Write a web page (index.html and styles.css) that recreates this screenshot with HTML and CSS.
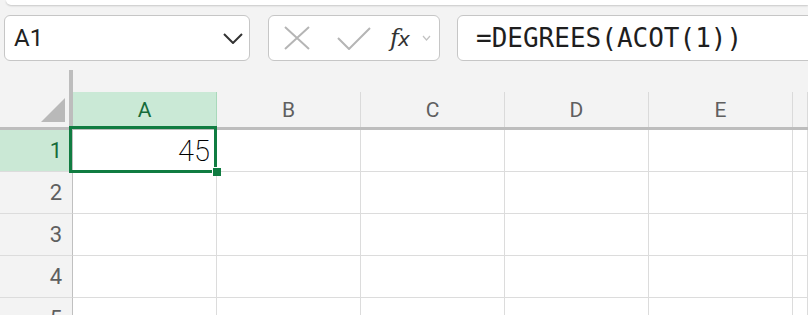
FILE: index.html
```html
<!DOCTYPE html>
<html>

<head>
    <meta charset="utf-8">
    <title>DEGREES ACOT</title>
    <link rel="stylesheet" href="styles.css">
</head>

<body>
    <div class="ribbon"></div>

    <!-- 수식 입력줄 -->
    <div class="formula-row">
        <div class="namebox">
            <span class="namebox-text">A1</span>
            <svg class="namebox-arrow" width="20" height="11" viewBox="0 0 20 11">
                <path d="M1 1 L10 10 L19 1" fill="none" stroke="#333" stroke-width="2"/>
            </svg>
        </div>
        <div class="fx-buttons">
            <svg class="btn-x" width="28" height="24" viewBox="0 0 28 24">
                <path d="M2 1 L26 23 M26 1 L2 23" stroke="#b5b5b5" stroke-width="2" fill="none"/>
            </svg>
            <svg class="btn-ok" width="34" height="23" viewBox="0 0 34 23">
                <path d="M1 11 L12 22 L33 1" stroke="#b5b5b5" stroke-width="2" fill="none"/>
            </svg>
            <span class="btn-fx"><i>f</i><em>x</em></span>
            <svg class="btn-more" width="9" height="6" viewBox="0 0 9 6">
                <path d="M1 1 L4.5 5 L8 1" stroke="#c2c2c2" stroke-width="1.2" fill="none"/>
            </svg>
        </div>
        <div class="formula">=DEGREES(ACOT(1))</div>
    </div>

    <!-- 시트 -->
    <div class="sheet">
        <div class="head-row">
            <div class="corner"><span class="corner-tri"></span></div>
            <div class="col-head active">A</div>
            <div class="col-head">B</div>
            <div class="col-head">C</div>
            <div class="col-head">D</div>
            <div class="col-head">E</div>
            <div class="col-head col-f"></div>
        </div>

        <div class="row">
            <div class="row-head active">1</div>
            <div class="cell selected">45<span class="sel-box"><span class="sel-handle"></span></span></div>
            <div class="cell"></div>
            <div class="cell"></div>
            <div class="cell"></div>
            <div class="cell"></div>
            <div class="cell col-f"></div>
        </div>
        <div class="row">
            <div class="row-head">2</div>
            <div class="cell"></div>
            <div class="cell"></div>
            <div class="cell"></div>
            <div class="cell"></div>
            <div class="cell"></div>
            <div class="cell col-f"></div>
        </div>
        <div class="row">
            <div class="row-head">3</div>
            <div class="cell"></div>
            <div class="cell"></div>
            <div class="cell"></div>
            <div class="cell"></div>
            <div class="cell"></div>
            <div class="cell col-f"></div>
        </div>
        <div class="row">
            <div class="row-head">4</div>
            <div class="cell"></div>
            <div class="cell"></div>
            <div class="cell"></div>
            <div class="cell"></div>
            <div class="cell"></div>
            <div class="cell col-f"></div>
        </div>
        <div class="row">
            <div class="row-head">5</div>
            <div class="cell"></div>
            <div class="cell"></div>
            <div class="cell"></div>
            <div class="cell"></div>
            <div class="cell"></div>
            <div class="cell col-f"></div>
        </div>
    </div>
</body>

</html>
```

FILE: styles.css
```css
body {
    margin: 0;
    background: #f3f3f3;
    font-family: Roboto, "Liberation Sans", sans-serif;
    overflow: hidden;
}

/* 리본 아래 끝 */
.ribbon {
    height: 5px;
    margin-left: 6px;
    background: #fff;
    border-bottom-left-radius: 7px;
    box-shadow: 0 1px 2px rgba(0, 0, 0, .18);
}

/* 수식 입력줄 */
.formula-row {
    display: flex;
    gap: 17px;
    padding: 10px 0 0 4px;
    height: 46px;
}

.namebox,
.fx-buttons,
.formula {
    box-sizing: border-box;
    height: 46px;
    background: #fff;
    border: 1px solid #c6c6c6;
    border-radius: 6px;
    display: flex;
    align-items: center;
}

.namebox {
    width: 246px;
    padding: 0 6px 0 9px;
    justify-content: space-between;
}

.namebox-text {
    font-size: 24px;
    color: #222;
}

.fx-buttons {
    width: 172px;
    margin-left: 1px;
    padding-left: 14px;
}

.btn-ok {
    margin-left: 26px;
}

.btn-fx {
    margin-left: 19px;
    color: #333;
}

.btn-fx i {
    font-family: "DejaVu Serif", serif;
    font-size: 24px;
}

.btn-fx em {
    font-family: "DejaVu Sans", sans-serif;
    font-size: 20px;
    margin-left: -1px;
}

.btn-more {
    margin-left: 12px;
}

.formula {
    flex: 1;
    margin-right: -20px;
    padding-left: 18px;
    font-family: "DejaVu Sans Mono", monospace;
    font-size: 26px;
    color: #1e1e1e;
}

/* 시트 */
.sheet {
    margin-top: 9px;
    background: #fff;
}

.head-row {
    box-sizing: border-box;
    display: flex;
    align-items: flex-end;
    height: 60px;
    background: #f3f3f3;
    border-bottom: 3px solid #bdbdbd;
}

.corner {
    box-sizing: border-box;
    width: 73px;
    height: 100%;
    border-right: 4px solid #bdbdbd;
    display: flex;
    align-items: flex-end;
    justify-content: flex-end;
    padding: 0 4px 5px 0;
}

.corner-tri {
    width: 24px;
    height: 24px;
    background: #b9b9b9;
    clip-path: polygon(100% 0, 100% 100%, 0 100%);
}

.col-head {
    box-sizing: border-box;
    width: 144px;
    height: 35px;
    border-right: 1px solid #dadada;
    font-size: 21px;
    color: #5f5f5f;
    display: flex;
    align-items: center;
    justify-content: center;
}

.col-head.active {
    background: #cae9d6;
    color: #156b3a;
    border-right-color: #a9d9bb;
}

.col-f {
    flex: 1;
}

.row {
    display: flex;
    height: 42px;
}

.row-head {
    box-sizing: border-box;
    width: 73px;
    background: #f3f3f3;
    border-right: 1px solid #c0c0c0;
    border-bottom: 1px solid #dcdcdc;
    padding-right: 10px;
    font-size: 22px;
    color: #5f5f5f;
    display: flex;
    align-items: center;
    justify-content: flex-end;
}

.row-head.active {
    background: #cae8d5;
    color: #156b3a;
}

.cell {
    box-sizing: border-box;
    width: 144px;
    border-right: 1px solid #dcdcdc;
    border-bottom: 1px solid #dcdcdc;
}

.cell.selected {
    position: relative;
    padding-right: 6px;
    font-size: 29px;
    font-weight: 200;
    color: #000;
    display: flex;
    align-items: center;
    justify-content: flex-end;
}

/* 선택 테두리 */
.sel-box {
    position: absolute;
    left: -4px;
    top: -4px;
    width: 148px;
    height: 47px;
    box-sizing: border-box;
    border: 3px solid #107c41;
}

.sel-handle {
    position: absolute;
    right: -7px;
    bottom: -6px;
    width: 8px;
    height: 8px;
    background: #107c41;
    border-left: 1px solid #fff;
    border-top: 1px solid #fff;
}
```
